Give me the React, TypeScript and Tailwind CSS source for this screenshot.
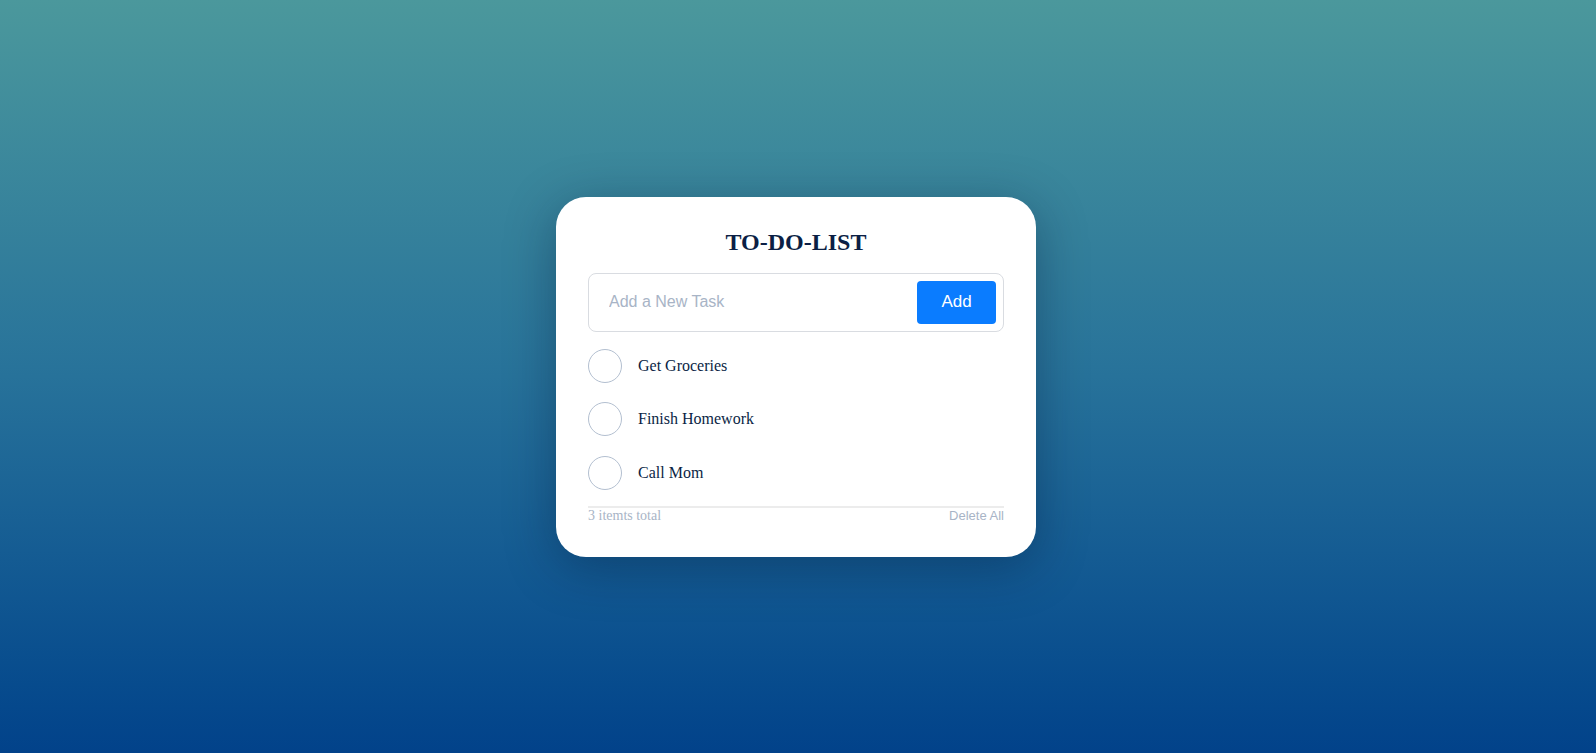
import React from "react";

const tasks = ["Get Groceries", "Finish Homework", "Call Mom"];

export default function App() {
  return (
    <div className="w-full h-[753px] bg-gradient-to-b from-[#4b989c] via-[#27729a] to-[#02428a] flex items-center justify-center pr-[4px]">
      <div className="w-[480px] h-[360px] bg-white rounded-[30px] shadow-[0_10px_50px_rgba(0,20,50,0.35)] px-[32px] pt-[31px] flex flex-col">
        <h1 className="text-center font-bold text-[24px] leading-[28px] text-[#0b1f45] mb-[17px]" style={{ fontFamily: '"Liberation Serif", "Times New Roman", serif' }}>
          TO-DO-LIST
        </h1>
        <div className="h-[59px] border border-[#d9dce1] rounded-[8px] flex items-center pl-[20px] pr-[7px]">
          <input
            className="flex-1 outline-none text-[16px] text-[#0b1f45] placeholder:text-[#a8b4c6] bg-transparent"
            style={{ fontFamily: '"Liberation Sans", Arial, sans-serif' }}
            placeholder="Add a New Task"
          />
          <button
            className="w-[79px] h-[43px] bg-[#0a7cff] text-white text-[17px] rounded-[4px]"
            style={{ fontFamily: '"Liberation Sans", Arial, sans-serif' }}
          >
            Add
          </button>
        </div>
        <ul className="flex flex-col gap-[19.5px] mt-[17px]">
          {tasks.map((t) => (
            <li key={t} className="flex items-center gap-[16px]">
              <span className="w-[34px] h-[34px] rounded-full border border-[#b3bfd0] shrink-0" />
              <span className="text-[16px] text-[#0b1f45]" style={{ fontFamily: '"Liberation Serif", "Times New Roman", serif' }}>
                {t}
              </span>
            </li>
          ))}
        </ul>
        <div className="mt-[16px] border-t-[2px] border-[#ececec] flex justify-between items-start pt-[1px]">
          <span className="text-[14px] leading-[14px] text-[#a8b4c6]" style={{ fontFamily: '"Liberation Serif", "Times New Roman", serif' }}>
            3 itemts total
          </span>
          <span className="text-[13px] leading-[14px] text-[#a8b4c6]" style={{ fontFamily: '"Liberation Sans", Arial, sans-serif' }}>
            Delete All
          </span>
        </div>
      </div>
    </div>
  );
}
